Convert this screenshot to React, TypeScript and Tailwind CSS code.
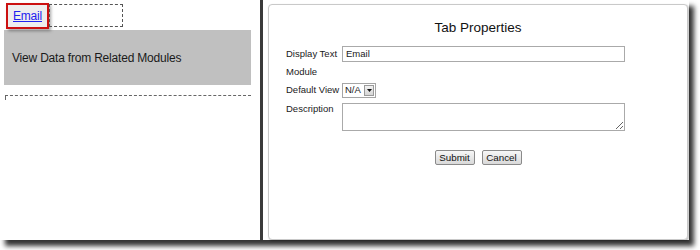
import React from 'react';

const TabPreview: React.FC = () => {
  return (
    <div className="w-[260px] h-full pl-[4px] pt-[3px] font-['Liberation_Sans',Arial,sans-serif]">
      {/* tab strip */}
      <div className="flex items-start">
        <div className="ml-[2px] w-[43px] h-[26px] border-2 border-[#cc1111] bg-[#eeeeee] shadow-[2px_2px_3px_rgba(0,0,0,0.35)] flex items-center pl-[5px]">
          <a href="#" className="text-[12px] text-[#2222ee] underline tracking-[-0.2px]">Email</a>
        </div>
        <div className="mt-[1px] w-[74px] h-[23px] border border-dashed border-[#555]" />
      </div>

      {/* related modules block */}
      <div className="mt-[1px] w-[247px] h-[55px] bg-[#c0c0c0] flex items-center pl-[8px]">
        <span className="text-[12px] text-[#1a1a1a] tracking-[-0.2px]">View Data from Related Modules</span>
      </div>

      {/* drop zone */}
      <div className="mt-[10px] ml-[1px] w-[246px] h-[5px] border-t border-l border-dashed border-[#666]" />
    </div>
  );
};

const TabProperties: React.FC = () => {
  return (
    <div className="flex-1 pl-[5px] pt-[4px] pr-[1px]">
      <div className="h-full bg-white border border-[#c9c9c9] rounded-[4px] shadow-[1px_1px_2px_rgba(0,0,0,0.25)] flex flex-col pt-[15px] pl-[17px] font-['Liberation_Sans',Arial,sans-serif] text-[#1a1a1a]">
        <div className="h-[16px] leading-[16px] text-[13.5px] text-[#111] text-center pr-[17px]">Tab Properties</div>

        <div className="mt-[10px] grid grid-cols-[56px_283px] text-[9.5px]">
          {/* Display Text */}
          <div className="h-[16px] flex items-center">Display Text</div>
          <div className="h-[16px] border border-[#aaaaaa] bg-white flex items-center pl-[3px]">Email</div>

          {/* Module */}
          <div className="mt-[2px] h-[16px] flex items-center">Module</div>
          <div className="mt-[2px] h-[16px]" />

          {/* Default View */}
          <div className="mt-[3px] h-[15px] flex items-center">Default View</div>
          <div className="mt-[3px] h-[15px]">
            <div className="w-[34px] h-[15px] border border-[#a5a5a5] bg-white flex items-center justify-between pl-[2px] pr-[1px]">
              <span>N/A</span>
              <div className="w-[10px] h-[11px] border border-[#9a9a9a] bg-gradient-to-b from-[#f2f2f2] to-[#d6d6d6] flex items-center justify-center">
                <svg width="5" height="3" viewBox="0 0 5 3">
                  <path d="M0 0 L5 0 L2.5 3 Z" fill="#111" />
                </svg>
              </div>
            </div>
          </div>

          {/* Description */}
          <div className="mt-[5px] h-[28px] leading-[12px]">Description</div>
          <textarea
            className="mt-[5px] h-[28px] w-[283px] border border-[#aaaaaa] bg-white outline-none"
            defaultValue=""
          />
        </div>

        <div className="mt-[19px] flex justify-center gap-[7px] pr-[17px] text-[9.8px]">
          <button className="w-[40px] h-[15px] border border-[#8a8a8a] rounded-[2px] bg-gradient-to-b from-[#f7f7f7] to-[#d9d9d9] text-[#111] leading-none">
            Submit
          </button>
          <button className="w-[40px] h-[15px] border border-[#8a8a8a] rounded-[2px] bg-gradient-to-b from-[#f7f7f7] to-[#d9d9d9] text-[#111] leading-none">
            Cancel
          </button>
        </div>
      </div>
    </div>
  );
};

export default function App() {
  return (
    <div className="w-[700px] h-[250px] bg-white">
      <div className="w-[689px] h-[240px] bg-white shadow-[5px_6px_5px_rgba(0,0,0,0.8)] flex">
        <TabPreview />
        {/* splitter */}
        <div className="w-[3px] h-full bg-[#3a3a3a]" />
        <TabProperties />
      </div>
    </div>
  );
}
